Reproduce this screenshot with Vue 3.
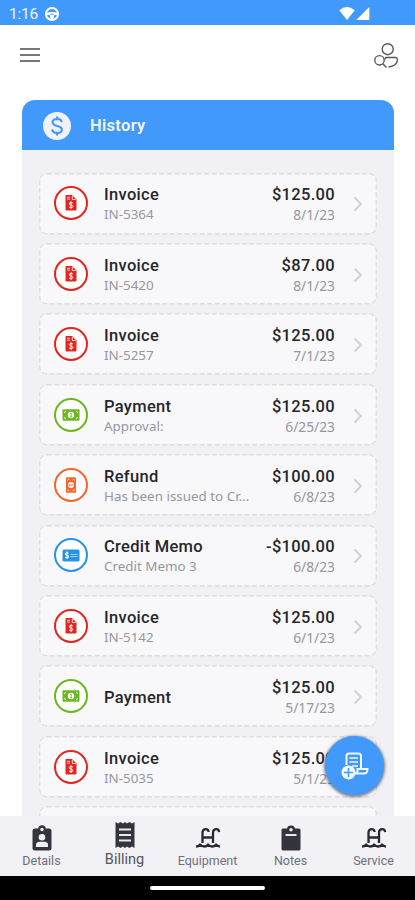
<script setup>
const rows = [
  { type: 'invoice', title: 'Invoice', sub: 'IN-5364', amount: '$125.00', date: '8/1/23' },
  { type: 'invoice', title: 'Invoice', sub: 'IN-5420', amount: '$87.00', date: '8/1/23' },
  { type: 'invoice', title: 'Invoice', sub: 'IN-5257', amount: '$125.00', date: '7/1/23' },
  { type: 'payment', title: 'Payment', sub: 'Approval:', amount: '$125.00', date: '6/25/23' },
  { type: 'refund', title: 'Refund', sub: 'Has been issued to Cr...', amount: '$100.00', date: '6/8/23' },
  { type: 'memo', title: 'Credit Memo', sub: 'Credit Memo 3', amount: '-$100.00', date: '6/8/23' },
  { type: 'invoice', title: 'Invoice', sub: 'IN-5142', amount: '$125.00', date: '6/1/23' },
  { type: 'payment', title: 'Payment', sub: '', amount: '$125.00', date: '5/17/23' },
  { type: 'invoice', title: 'Invoice', sub: 'IN-5035', amount: '$125.00', date: '5/1/23' },
  { type: 'invoice', title: '', sub: '', amount: '', date: '' },
]
const tabs = [
  { name: 'Details', icon: 'badge' },
  { name: 'Billing', icon: 'receipt', active: true },
  { name: 'Equipment', icon: 'pool' },
  { name: 'Notes', icon: 'clipboard' },
  { name: 'Service', icon: 'pool' },
]
</script>

<template>
  <div class="screen">
    <div class="status">
      <span class="clock">1:16</span>
      <svg class="wheel" width="16" height="16" viewBox="0 0 16 16">
        <circle cx="8" cy="8" r="6" fill="none" stroke="#fff" stroke-width="2.1" />
        <path d="M2 7.2Q8 4.8 14 7.2V9H10.4L9.2 13.500H6.800L5.600 9H2Z" fill="#fff" />
        <path d="M6.300 8.200h3.400" stroke="#4099fb" stroke-width="1" />
      </svg>
      <svg class="signal" width="32" height="16" viewBox="0 0 32 16">
        <path d="M0.300 4.300Q8 -2.300 15.700 4.300L8 14Z" fill="#fff" />
        <path d="M17.200 14L30.300 1V14Z" fill="#fff" />
      </svg>
    </div>

    <header class="appbar">
      <svg width="22" height="16" viewBox="0 0 22 16">
        <path d="M1 2h20M1 8h20M1 14h20" stroke="#777" stroke-width="2" />
      </svg>
      <svg width="26" height="28" viewBox="0 0 26 28" fill="none" stroke="#555" stroke-width="1.350">
        <circle cx="14.700" cy="7.200" r="5.500" />
        <circle cx="6.500" cy="18.300" r="4.700" />
        <path d="M9.800 21.800l3.700 3.700M12.300 15.500H22.200Q24.500 15.500 24.400 18Q24.200 23.800 15.500 25M12.300 15.500v2" />
      </svg>
    </header>

    <main class="panel">
      <div class="panel-head">
        <svg width="28" height="28" viewBox="0 0 28 28">
          <circle cx="14" cy="14" r="14" fill="#f1f2f8" />
          <path d="M18.700 10.300Q18.500 7 14.200 7Q9.700 7.100 9.600 10.200Q9.600 12.700 14.200 13.900Q19 15 18.900 17.700Q18.700 20.900 14.200 20.900Q9.500 20.900 9.200 17.400M14.100 4.400v2.600M14.100 21v2.600" fill="none" stroke="#4099fb" stroke-width="2.100" />
        </svg>
        <h1>History</h1>
      </div>
      <div class="list">
        <div v-for="(r, i) in rows" :key="i" class="row">
          <svg class="outline" width="338" height="62">
            <rect x="0.750" y="0.750" width="336.500" height="60" rx="7" fill="#f8f8fb" stroke="#dcdce2" stroke-width="1.300" stroke-dasharray="5 2.500" />
          </svg>
          <div class="kind" :class="r.type">
            <svg v-if="r.type === 'invoice'" width="12" height="16" viewBox="0 0 12 16">
              <path d="M1 0H7L11.500 4.500V14.500Q11.500 15.500 10.500 15.500H1.500Q.5 15.500 .5 14.500V1Q.5 0 1 0Z" fill="currentColor" />
              <path d="M2 2.300h3M2 4.200h3M7.300 1v3.500h3.500" fill="none" stroke="#fff" stroke-width=".8" />
              <path d="M8 8.200Q7.500 7.500 6 7.500Q4.200 7.600 4.200 8.700Q4.300 9.700 6 10Q7.900 10.300 7.900 11.500Q7.800 12.700 6 12.700Q4.500 12.700 4 11.800M6 6.300v7.500" fill="none" stroke="#fff" stroke-width="1" />
            </svg>
            <svg v-else-if="r.type === 'payment' || r.type === 'refund'" :class="{ upright: r.type === 'refund' }" width="18" height="12" viewBox="0 0 18 12">
              <rect x=".5" y=".3" width="17" height="11.400" rx="1" fill="currentColor" />
              <path d="M2 3.500Q3.700 3.500 3.700 1.800M14.300 1.800Q14.300 3.500 16 3.500M2 8.500Q3.700 8.500 3.700 10.200M14.300 10.200Q14.300 8.500 16 8.500" fill="none" stroke="#fff" stroke-width=".9" />
              <circle cx="9" cy="6" r="3.200" fill="#fff" />
              <path d="M8.200 4.700L9.200 4.200V7.800M8 7.900h2.300" fill="none" stroke="currentColor" stroke-width=".9" />
            </svg>
            <svg v-else width="18" height="13" viewBox="0 0 18 13">
              <rect x=".5" y=".5" width="17" height="12" rx="1.500" fill="currentColor" />
              <path d="M6.500 4.300Q5.800 3.700 4.900 3.800Q3.500 4 3.500 5Q3.600 5.900 5 6.300Q6.600 6.700 6.500 7.700Q6.400 8.700 5 8.800Q4 8.800 3.300 8.100M5 2.600v7.500" fill="none" stroke="#fff" stroke-width="1.100" />
              <path d="M8.500 5.500h7M8.500 7.500h7" stroke="#b9dcf8" stroke-width=".8" />
            </svg>
          </div>
          <div class="text">
            <div class="title">{{ r.title }}</div>
            <div v-if="r.sub" class="sub">{{ r.sub }}</div>
          </div>
          <div class="money">
            <div class="title amount">{{ r.amount }}</div>
            <div class="sub date">{{ r.date }}</div>
          </div>
          <svg class="chev" width="10" height="16" viewBox="0 0 10 16">
            <path d="M1.500 1.500L8 8L1.500 14.500" fill="none" stroke="#cfd0d9" stroke-width="1.900" />
          </svg>
        </div>
      </div>
    </main>

    <button class="fab">
      <svg width="30" height="30" viewBox="0 0 30 30" fill="none" stroke="#f4f8ff" stroke-width="2">
        <path d="M6.500 14V5Q6.500 2.500 9 2.500H18.500Q21 2.500 21 5V17.500M15 22.500H24Q27.500 22.500 27.500 18H17.500V20Q17.500 22.500 15 22.500" />
        <path d="M9.500 7h8.500M9.500 11h8.500M12 15h6" stroke-width="1.700" />
        <circle cx="8.500" cy="21.500" r="7" fill="#f4f8ff" stroke="none" />
        <path d="M8.500 17v9M4 21.500h9" stroke="#4099fb" stroke-width="1.500" />
      </svg>
    </button>

    <nav class="tabs">
      <div v-for="t in tabs" :key="t.name" class="tab" :class="{ active: t.active }">
        <svg v-if="t.icon === 'badge'" width="20" height="26" viewBox="0 0 20 26">
          <rect x=".5" y="3.500" width="19" height="22" rx="2.500" fill="#34353c" />
          <circle cx="10" cy="4" r="3.800" fill="#34353c" />
          <circle cx="10" cy="4.500" r="1.700" fill="#f1f1f6" />
          <circle cx="10" cy="12.300" r="3.300" fill="#f1f1f6" />
          <path d="M4 22V20Q4 16.800 8 16.800H12Q16 16.800 16 20V22Z" fill="#f1f1f6" />
        </svg>
        <svg v-else-if="t.icon === 'receipt'" width="20" height="26" viewBox="0 0 20 26">
          <path d="M.5 0L3 1.500L5.500 0L8 1.500L10 0L12 1.500L14.500 0L17 1.500L19.500 0V26L17 24.500L14.500 26L12 24.500L10 26L8 24.500L5.500 26L3 24.500L.5 26Z" fill="#34353c" />
          <path d="M4 7.500h12M4 13h12M4 18.500h12" stroke="#e9e9ee" stroke-width="1.800" />
        </svg>
        <svg v-else-if="t.icon === 'pool'" class="pool" width="26" height="22" viewBox="0 0 26 22" fill="none" stroke="#292a31" stroke-width="2.300">
          <path d="M7.500 16V6Q7.500 2.200 11 2.200Q13.300 2.200 13.600 5M18 16V6Q18 2.200 21.500 2.200Q23.800 2.200 24.200 5M7.500 10.500H18" />
          <path d="M1 19.500Q3.500 19.500 5 17.700Q7 19.500 9.500 19.500Q11.500 19.500 13 17.700Q15 19.500 17 19.500Q19.500 19.500 21 17.700Q23 19.500 25 19.500" />
        </svg>
        <svg v-else width="20" height="26" viewBox="0 0 20 26">
          <rect x=".5" y="3.500" width="19" height="22" rx="1.500" fill="#34353c" />
          <circle cx="10" cy="4.500" r="4" fill="#34353c" />
          <circle cx="10" cy="4.800" r="1.700" fill="#f1f1f6" />
          <path d="M4.500 10h11" stroke="#f1f1f6" stroke-width="1.900" />
        </svg>
        <span>{{ t.name }}</span>
      </div>
    </nav>
    <div class="gesture"><i></i></div>
  </div>
</template>

<style>
body {
  background: #fff;
}
</style>

<style scoped>
.screen {
  position: relative;
  width: 415px;
  height: 900px;
  overflow: hidden;
  display: flex;
  flex-direction: column;
  background: #fff;
  font-family: Roboto, sans-serif;
}
.status {
  height: 25px;
  flex: none;
  box-sizing: border-box;
  padding: 3px 44px 0 9px;
  display: flex;
  align-items: center;
  background: #4099fb;
  color: #eef6ff;
}
.clock {
  font-size: 15.5px;
  line-height: 20px;
  letter-spacing: -0.2px;
}
.wheel {
  margin-left: 6px;
}
.signal {
  margin-left: auto;
}
.appbar {
  height: 75px;
  flex: none;
  box-sizing: border-box;
  padding: 17px 16px 0 19px;
  display: flex;
  justify-content: space-between;
  align-items: flex-start;
}
.appbar svg:first-child {
  margin-top: 5px;
}
.panel {
  flex: 1;
  min-height: 0;
  margin: 0 21px 0 22px;
  display: flex;
  flex-direction: column;
  overflow: hidden;
  border-radius: 13px 13px 0 0;
  background: #f0f0f5;
}
.panel-head {
  height: 50px;
  flex: none;
  box-sizing: border-box;
  padding: 1px 0 0 21px;
  display: flex;
  align-items: center;
  gap: 19px;
  background: #4099fb;
}
h1 {
  margin: 1px 0 0;
  color: #f3f7fe;
  font-size: 16.5px;
  font-weight: 600;
  line-height: 22px;
  letter-spacing: 0.3px;
}
.list {
  display: flex;
  flex-direction: column;
  gap: 8.9px;
  padding: 22.7px 17px 0 17px;
}
.row {
  position: relative;
  height: 61.500px;
  flex: none;
  box-sizing: border-box;
  padding: 0 14px 0 15px;
  display: flex;
  align-items: center;
}
.outline {
  position: absolute;
  inset: 0;
}
.kind,
.text,
.money,
.chev {
  position: relative;
}
.kind {
  width: 34px;
  height: 34px;
  flex: none;
  box-sizing: border-box;
  border: 2px solid currentColor;
  border-radius: 50%;
  display: flex;
  align-items: center;
  justify-content: center;
  background: #fff;
}
.invoice {
  color: #e5241e;
}
.payment {
  color: #6eb61f;
}
.refund {
  color: #f7662b;
}
.memo {
  color: #2793e8;
}
.upright {
  transform: rotate(90deg) scale(.9);
}
.text {
  width: 156px;
  padding-top: 3px;
  margin-left: 16px;
}
.title {
  color: #26262a;
  font-size: 16.500px;
  font-weight: 500;
  line-height: 20px;
  letter-spacing: 0.32px;
  white-space: nowrap;
}
.sub {
  color: #96969d;
  font-family: "Noto Sans", sans-serif;
  font-size: 13.4px;
  line-height: 19px;
  white-space: nowrap;
}
.money {
  flex: 1;
  padding-top: 3px;
  text-align: right;
}
.date {
  font-size: 13.8px;
}
.chev {
  margin: 2px 0 0 18px;
}
.fab {
  position: absolute;
  left: 325px;
  top: 736px;
  width: 59px;
  height: 59px;
  padding: 0;
  border: 0;
  border-radius: 50%;
  display: flex;
  align-items: center;
  justify-content: center;
  background: #4099fb;
  box-shadow: 0 1px 3px 1px rgba(40, 45, 60, .6);
}
.tabs {
  position: relative;
  height: 60px;
  flex: none;
  display: grid;
  grid-template-columns: repeat(5, 83px);
  background: #f1f1f6;
}
.tab {
  display: flex;
  flex-direction: column;
  align-items: center;
  justify-content: flex-end;
  padding-bottom: 7px;
  gap: 1px;
  color: #6f6f76;
  font-size: 12.500px;
  line-height: 17px;
}
.pool {
  margin-bottom: 2px;
}
.active {
  padding-bottom: 8px;
  gap: 3px;
  color: #55555c;
  font-size: 14.500px;
}
.gesture {
  height: 24px;
  flex: none;
  display: flex;
  align-items: center;
  justify-content: center;
  background: #000;
}
.gesture i {
  width: 115px;
  height: 4px;
  border-radius: 2px;
  background: #fff;
}
</style>
